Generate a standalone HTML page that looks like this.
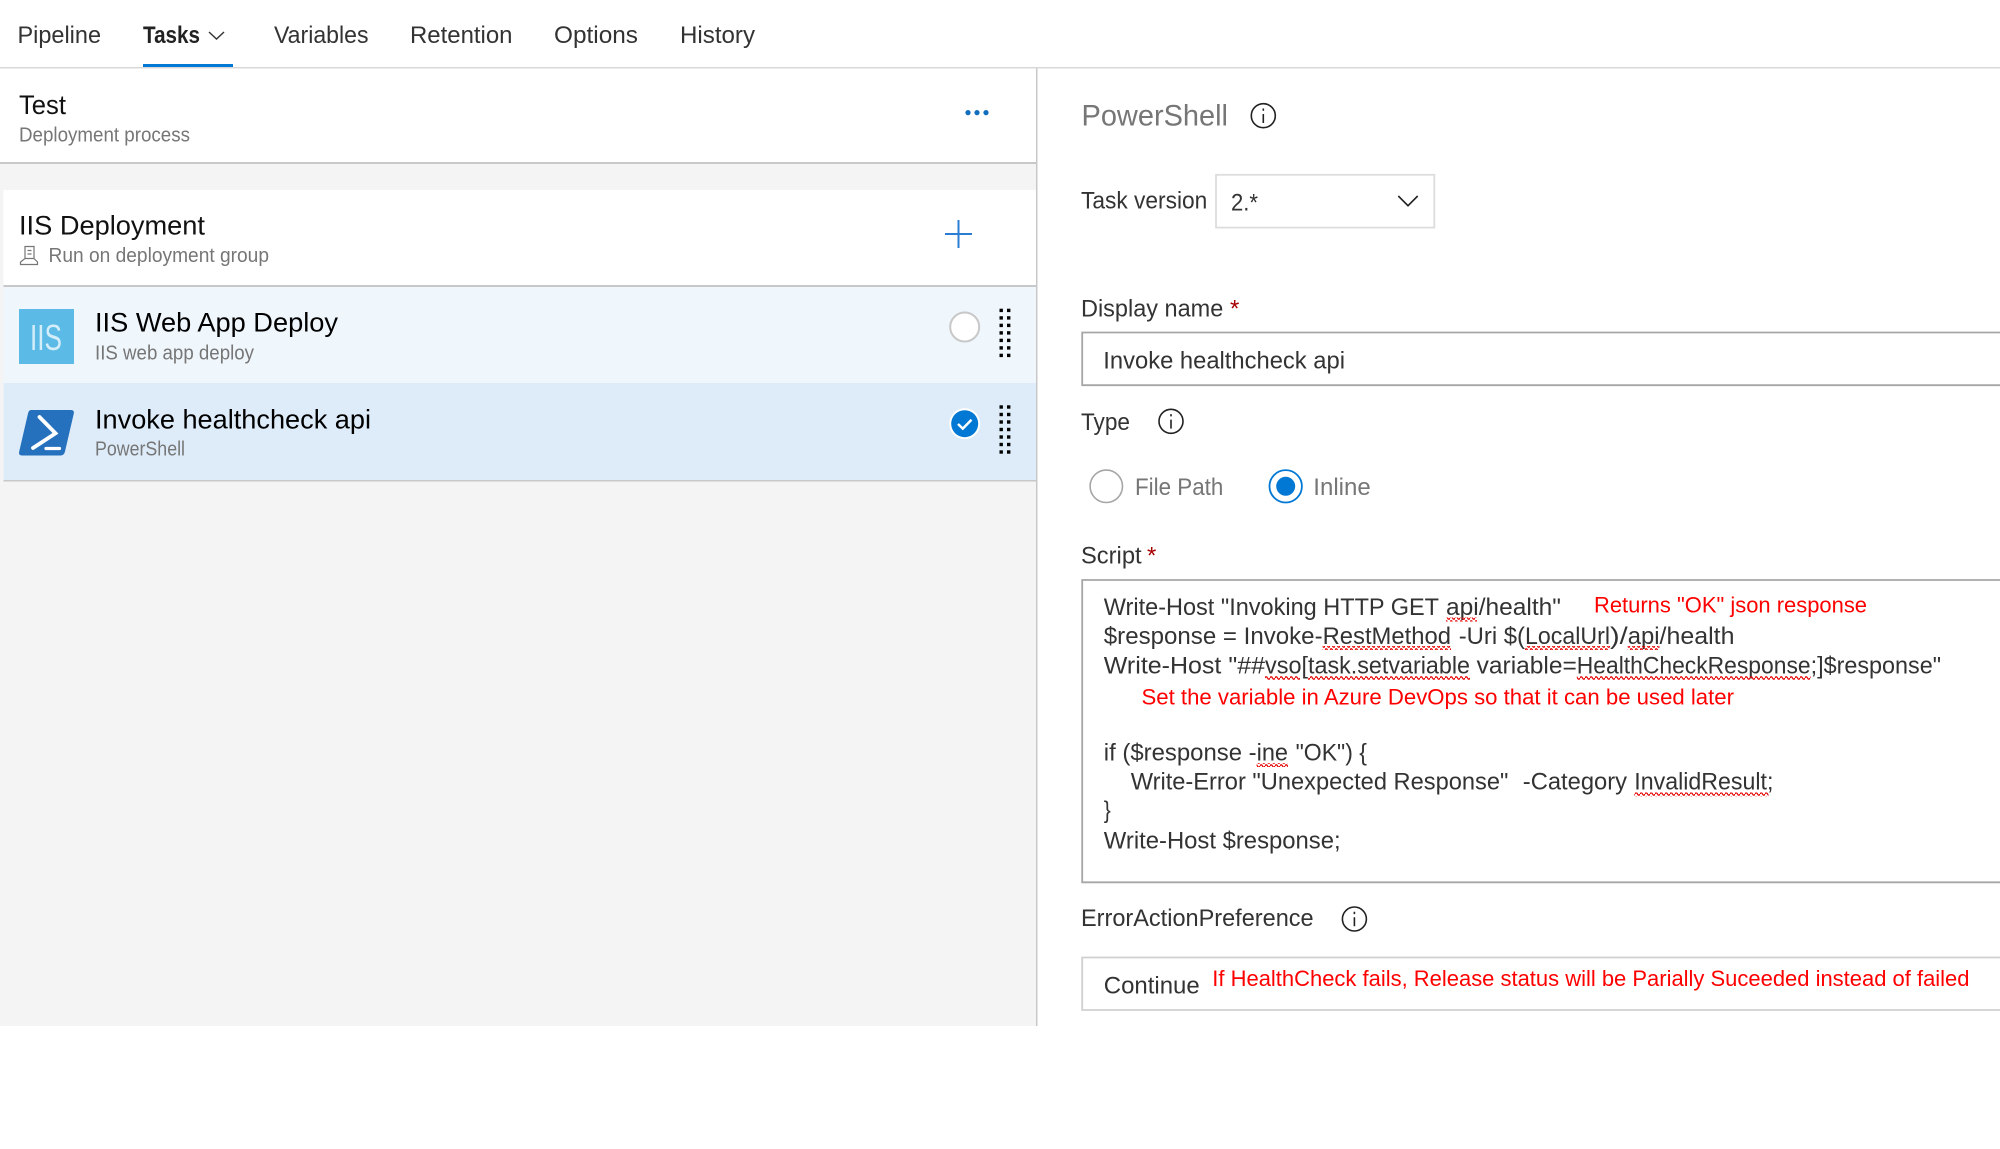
<!DOCTYPE html>
<html lang="en">
<head>
<meta charset="utf-8">
<title>Deployment process</title>
<style>
html,body{margin:0;padding:0;background:#fff;width:2000px;height:1149px;overflow:hidden}
svg{display:block}
text{font-family:"Liberation Sans",sans-serif;white-space:pre}
.nav{font-size:24px;fill:#333}
.h{font-size:27px;fill:#111}
.sub{font-size:20px;fill:#767676}
.lab{font-size:24px;fill:#333}
.scr{font-size:24px;fill:#333}
.red{font-size:22px;fill:#f00}
.ast{font-size:24px;fill:#a80000}
</style>
</head>
<body>
<svg xmlns="http://www.w3.org/2000/svg" width="2000" height="1149" viewBox="0 0 2000 1149">
<defs>
<pattern id="w" width="5" height="4" patternUnits="userSpaceOnUse">
<path d="M0 2 Q1.250 -0.500 2.500 2 T5 2" fill="none" stroke="#e60000" stroke-width="1.300"/>
</pattern>
</defs>
<rect width="2000" height="1149" fill="#fff"/>

<!-- left panel -->
<rect x="0" y="164" width="1036" height="862" fill="#f4f4f4"/>
<rect x="0" y="68" width="1036" height="94" fill="#fff"/>
<rect x="0" y="162" width="1036" height="2" fill="#c8c8c8"/>
<rect x="3.500" y="190" width="1032.500" height="95" fill="#fff"/>
<rect x="3.500" y="285" width="1032.500" height="2" fill="#c8c8c8"/>
<rect x="3.500" y="287" width="1032.500" height="96" fill="#eff6fc"/>
<rect x="3.500" y="383" width="1032.500" height="97" fill="#deecf9"/>
<rect x="3.500" y="480" width="1032.500" height="1.500" fill="#c8c8c8"/>
<rect x="1036" y="68" width="1.500" height="958" fill="#c8c8c8"/>

<!-- nav -->
<rect x="0" y="67" width="2000" height="1.500" fill="#d8d8d8"/>
<rect x="143" y="64" width="90" height="3" fill="#0078d4"/>
<text class="nav" x="17.500" y="43" textLength="83.500" lengthAdjust="spacingAndGlyphs">Pipeline</text>
<text class="nav" x="143" y="43" textLength="57" lengthAdjust="spacingAndGlyphs" font-weight="700" style="fill:#222">Tasks</text>
<path d="M209 32 L216.500 39 L224 32" fill="none" stroke="#333" stroke-width="1.400"/>
<text class="nav" x="274" y="43" textLength="94.500" lengthAdjust="spacingAndGlyphs">Variables</text>
<text class="nav" x="410" y="43" textLength="102.500" lengthAdjust="spacingAndGlyphs">Retention</text>
<text class="nav" x="554" y="43" textLength="84" lengthAdjust="spacingAndGlyphs">Options</text>
<text class="nav" x="680" y="43" textLength="75" lengthAdjust="spacingAndGlyphs">History</text>

<!-- test header -->
<text class="h" x="19" y="114" textLength="47" lengthAdjust="spacingAndGlyphs">Test</text>
<text class="sub" x="19" y="141.700" textLength="171" lengthAdjust="spacingAndGlyphs">Deployment process</text>
<circle cx="968" cy="112.600" r="2.600" fill="#106ebe"/>
<circle cx="977" cy="112.600" r="2.600" fill="#106ebe"/>
<circle cx="986" cy="112.600" r="2.600" fill="#106ebe"/>

<!-- group -->
<text class="h" x="19" y="234.700" textLength="186" lengthAdjust="spacingAndGlyphs">IIS Deployment</text>
<path d="M25 246.500 H34 V258.500 H25 Z M27.500 250.500 H31.500 M27.500 254 H31.500 M25 258.500 L20.500 262 V264.500 H37.500 V262 L34 258.500" fill="none" stroke="#767676" stroke-width="1.200"/>
<text class="sub" x="48.500" y="262" textLength="220.500" lengthAdjust="spacingAndGlyphs">Run on deployment group</text>
<path d="M958.500 220 V248 M945 234 H972" stroke="#2b7cd3" stroke-width="2" fill="none"/>

<!-- task 1 -->
<rect x="19" y="309" width="55" height="55" fill="#5bbbe6"/>
<text x="30" y="350" font-size="36" fill="#d3edf9" textLength="32" lengthAdjust="spacingAndGlyphs">IIS</text>
<text class="h" x="95" y="331.700" style="fill:#000" textLength="243" lengthAdjust="spacingAndGlyphs">IIS Web App Deploy</text>
<text class="sub" x="95" y="359.500" textLength="159" lengthAdjust="spacingAndGlyphs">IIS web app deploy</text>
<circle cx="964.700" cy="327" r="14.500" fill="#fff" stroke="#c8c8c8" stroke-width="2"/>
<g fill="#000">
<rect x="999.500" y="308.700" width="3.400" height="3.400"/><rect x="1007" y="308.700" width="3.400" height="3.400"/>
<rect x="999.500" y="316.200" width="3.400" height="3.400"/><rect x="1007" y="316.200" width="3.400" height="3.400"/>
<rect x="999.500" y="323.700" width="3.400" height="3.400"/><rect x="1007" y="323.700" width="3.400" height="3.400"/>
<rect x="999.500" y="331.200" width="3.400" height="3.400"/><rect x="1007" y="331.200" width="3.400" height="3.400"/>
<rect x="999.500" y="338.700" width="3.400" height="3.400"/><rect x="1007" y="338.700" width="3.400" height="3.400"/>
<rect x="999.500" y="346.200" width="3.400" height="3.400"/><rect x="1007" y="346.200" width="3.400" height="3.400"/>
<rect x="999.500" y="353.700" width="3.400" height="3.400"/><rect x="1007" y="353.700" width="3.400" height="3.400"/>
</g>

<!-- task 2 -->
<path d="M31 410 H71 Q74.500 410 73.800 413.500 L65 451.500 Q64 455.500 60.500 455.500 H22 Q18.300 455.500 19.200 451.500 L28 413.500 Q28.800 410 31 410 Z" fill="#2671be"/>
<path d="M39.500 417 L55.500 433.300 L33 448" fill="none" stroke="#fff" stroke-width="3.800" stroke-linecap="round" stroke-linejoin="miter"/>
<path d="M46 448.500 H59.500" fill="none" stroke="#fff" stroke-width="3.200" stroke-linecap="round"/>
<text class="h" x="95" y="428.300" style="fill:#000" textLength="276" lengthAdjust="spacingAndGlyphs">Invoke healthcheck api</text>
<text class="sub" x="95" y="455.700" textLength="90" lengthAdjust="spacingAndGlyphs">PowerShell</text>
<circle cx="964.700" cy="423.700" r="15.500" fill="#fff"/>
<circle cx="964.700" cy="423.700" r="13.500" fill="#0078d4"/>
<path d="M958 424 L962.800 428.600 L971.500 419.800" fill="none" stroke="#fff" stroke-width="2.500"/>
<g fill="#000">
<rect x="999.500" y="405.300" width="3.400" height="3.400"/><rect x="1007" y="405.300" width="3.400" height="3.400"/>
<rect x="999.500" y="412.800" width="3.400" height="3.400"/><rect x="1007" y="412.800" width="3.400" height="3.400"/>
<rect x="999.500" y="420.300" width="3.400" height="3.400"/><rect x="1007" y="420.300" width="3.400" height="3.400"/>
<rect x="999.500" y="427.800" width="3.400" height="3.400"/><rect x="1007" y="427.800" width="3.400" height="3.400"/>
<rect x="999.500" y="435.300" width="3.400" height="3.400"/><rect x="1007" y="435.300" width="3.400" height="3.400"/>
<rect x="999.500" y="442.800" width="3.400" height="3.400"/><rect x="1007" y="442.800" width="3.400" height="3.400"/>
<rect x="999.500" y="450.300" width="3.400" height="3.400"/><rect x="1007" y="450.300" width="3.400" height="3.400"/>
</g>

<!-- right panel -->
<text x="1081.500" y="125.700" font-size="30" fill="#767676" textLength="146.500" lengthAdjust="spacingAndGlyphs">PowerShell</text>
<circle cx="1263.300" cy="115.700" r="12" fill="none" stroke="#222" stroke-width="1.600"/>
<path d="M1263.300 114 V123 M1263.300 108.500 V110.800" stroke="#222" stroke-width="1.600" fill="none"/>

<text class="lab" x="1081" y="208.300" textLength="126.300" lengthAdjust="spacingAndGlyphs">Task version</text>
<rect x="1216" y="174.800" width="218.300" height="52.800" fill="#fff" stroke="#ddd" stroke-width="1.800"/>
<text class="lab" x="1231" y="210.700" textLength="27" lengthAdjust="spacingAndGlyphs">2.*</text>
<path d="M1398.300 196 L1408 205.700 L1417.700 196" fill="none" stroke="#222" stroke-width="1.600"/>

<text class="lab" x="1081" y="316.700" textLength="142.300" lengthAdjust="spacingAndGlyphs">Display name</text>
<text class="ast" x="1230" y="316.700">*</text>
<path d="M2000 332.500 H1082.200 V385.200 H2000" fill="#fff" stroke="#a6a6a6" stroke-width="1.800"/>
<text class="lab" x="1103.300" y="368.300" textLength="241.700" lengthAdjust="spacingAndGlyphs">Invoke healthcheck api</text>

<text class="lab" x="1081" y="430" textLength="49" lengthAdjust="spacingAndGlyphs">Type</text>
<circle cx="1171" cy="421.300" r="12" fill="none" stroke="#222" stroke-width="1.600"/>
<path d="M1171 419.600 V428.600 M1171 414.100 V416.400" stroke="#222" stroke-width="1.600" fill="none"/>

<circle cx="1106.300" cy="486.300" r="16.200" fill="#fff" stroke="#a6a6a6" stroke-width="1.600"/>
<text class="lab" x="1135" y="495" style="fill:#767676" textLength="88.300" lengthAdjust="spacingAndGlyphs">File Path</text>
<circle cx="1285.700" cy="486.300" r="16.200" fill="#fff" stroke="#0078d4" stroke-width="1.800"/>
<circle cx="1285.700" cy="486.300" r="9.500" fill="#0078d4"/>
<text class="lab" x="1313.300" y="495" style="fill:#767676" textLength="57.400" lengthAdjust="spacingAndGlyphs">Inline</text>

<text class="lab" x="1081" y="563.500" textLength="60.600" lengthAdjust="spacingAndGlyphs">Script</text>
<text class="ast" x="1147" y="563.500">*</text>

<path d="M2000 580 H1082.200 V882.300 H2000" fill="#fff" stroke="#a6a6a6" stroke-width="1.800"/>

<!-- script text, split so squiggles line up -->
<text class="scr" x="1103.800" y="615" textLength="335.200" lengthAdjust="spacingAndGlyphs">Write-Host "Invoking HTTP GET</text>
<text class="scr" x="1446" y="615" textLength="115" lengthAdjust="spacingAndGlyphs">api/health"</text>
<text class="red" x="1594" y="612.700" textLength="273" lengthAdjust="spacingAndGlyphs">Returns "OK" json response</text>

<text class="scr" x="1103.800" y="644" textLength="218.800" lengthAdjust="spacingAndGlyphs">$response = Invoke-</text>
<text class="scr" x="1322.600" y="644" textLength="128.400" lengthAdjust="spacingAndGlyphs">RestMethod</text>
<text class="scr" x="1458.700" y="644" textLength="66.300" lengthAdjust="spacingAndGlyphs">-Uri $(</text>
<text class="scr" x="1525" y="644" textLength="85" lengthAdjust="spacingAndGlyphs">LocalUrl</text>
<text class="scr" x="1610" y="644" textLength="17.700" lengthAdjust="spacingAndGlyphs">)/</text>
<text class="scr" x="1627.700" y="644" textLength="31.800" lengthAdjust="spacingAndGlyphs">api</text>
<text class="scr" x="1659.500" y="644" textLength="75" lengthAdjust="spacingAndGlyphs">/health</text>

<text class="scr" x="1103.800" y="673.300" textLength="161.200" lengthAdjust="spacingAndGlyphs">Write-Host "##</text>
<text class="scr" x="1265" y="673.300" textLength="43" lengthAdjust="spacingAndGlyphs">vso[</text>
<text class="scr" x="1308" y="673.300" textLength="162" lengthAdjust="spacingAndGlyphs">task.setvariable</text>
<text class="scr" x="1476.700" y="673.300" textLength="100.100" lengthAdjust="spacingAndGlyphs">variable=</text>
<text class="scr" x="1576.800" y="673.300" textLength="233.800" lengthAdjust="spacingAndGlyphs">HealthCheckResponse</text>
<text class="scr" x="1810.600" y="673.300" textLength="130.400" lengthAdjust="spacingAndGlyphs">;]$response"</text>

<text class="red" x="1141.500" y="704.300" textLength="592.500" lengthAdjust="spacingAndGlyphs">Set the variable in Azure DevOps so that it can be used later</text>

<text class="scr" x="1103.800" y="760.700" textLength="152.800" lengthAdjust="spacingAndGlyphs">if ($response -</text>
<text class="scr" x="1256.600" y="760.700" textLength="31.400" lengthAdjust="spacingAndGlyphs">ine</text>
<text class="scr" x="1295.600" y="760.700" textLength="71.400" lengthAdjust="spacingAndGlyphs">"OK") {</text>

<text class="scr" x="1130.700" y="789.300" textLength="377.700" lengthAdjust="spacingAndGlyphs">Write-Error "Unexpected Response"</text>
<text class="scr" x="1522.800" y="789.300" textLength="104.200" lengthAdjust="spacingAndGlyphs">-Category</text>
<text class="scr" x="1634.300" y="789.300" textLength="139.100" lengthAdjust="spacingAndGlyphs">InvalidResult;</text>

<text class="scr" x="1103.800" y="818" textLength="7" lengthAdjust="spacingAndGlyphs">}</text>
<text class="scr" x="1103.800" y="848.300" textLength="236.800" lengthAdjust="spacingAndGlyphs">Write-Host $response;</text>

<!-- squiggles -->
<g fill="url(#w)">
<rect x="1446" y="617.500" width="31" height="4"/>
<rect x="1322.600" y="646" width="128.400" height="4"/>
<rect x="1525" y="646" width="85" height="4"/>
<rect x="1627.700" y="646" width="31.800" height="4"/>
<rect x="1265" y="676" width="35" height="4"/>
<rect x="1308" y="676" width="162" height="4"/>
<rect x="1576.800" y="676" width="233.800" height="4"/>
<rect x="1256.600" y="763" width="31.400" height="4"/>
<rect x="1634.300" y="792.500" width="134.300" height="4"/>
</g>

<text class="lab" x="1081" y="926" textLength="232.600" lengthAdjust="spacingAndGlyphs">ErrorActionPreference</text>
<circle cx="1354.400" cy="919" r="12" fill="none" stroke="#222" stroke-width="1.600"/>
<path d="M1354.400 917.300 V926.300 M1354.400 911.800 V914.100" stroke="#222" stroke-width="1.600" fill="none"/>

<path d="M2000 957.500 H1082.200 V1010 H2000" fill="#fff" stroke="#d0d0d0" stroke-width="1.800"/>
<text class="lab" x="1103.800" y="993.300" textLength="95.900" lengthAdjust="spacingAndGlyphs">Continue</text>
<text class="red" x="1212.300" y="986" textLength="757.200" lengthAdjust="spacingAndGlyphs">If HealthCheck fails, Release status will be Parially Suceeded instead of failed</text>
</svg>
</body>
</html>
